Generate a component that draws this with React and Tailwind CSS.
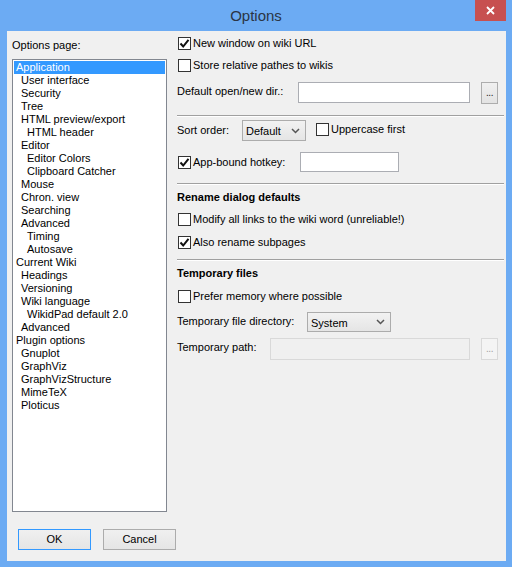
import React from 'react';

const pages = [
  ['Application', 0],
  ['User interface', 1],
  ['Security', 1],
  ['Tree', 1],
  ['HTML preview/export', 1],
  ['HTML header', 2],
  ['Editor', 1],
  ['Editor Colors', 2],
  ['Clipboard Catcher', 2],
  ['Mouse', 1],
  ['Chron. view', 1],
  ['Searching', 1],
  ['Advanced', 1],
  ['Timing', 2],
  ['Autosave', 2],
  ['Current Wiki', 0],
  ['Headings', 1],
  ['Versioning', 1],
  ['Wiki language', 1],
  ['WikidPad default 2.0', 2],
  ['Advanced', 1],
  ['Plugin options', 0],
  ['Gnuplot', 1],
  ['GraphViz', 1],
  ['GraphVizStructure', 1],
  ['MimeTeX', 1],
  ['Ploticus', 1],
];

const indent = ['pl-[2px]', 'pl-[7px]', 'pl-[13px]'];

const CheckBox = ({ checked, label, className = '' }) => (
  <div className={`flex items-center h-[13px] ${className}`}>
    <div className="w-[13px] h-[13px] border border-[#333333] bg-white flex items-center justify-center shrink-0">
      {checked && (
        <svg width="11" height="11" viewBox="0 0 11 11">
          <path d="M1.5 5.5 L4.2 8.5 L9.5 1.8" fill="none" stroke="#111" strokeWidth="2" />
        </svg>
      )}
    </div>
    <span className="ml-[2px] leading-none">{label}</span>
  </div>
);

const Select = ({ value, className }) => (
  <div
    className={`flex items-center justify-between border border-[#acacac] bg-gradient-to-b from-[#f2f2f2] to-[#e5e5e5] pl-[3px] pr-[5px] ${className}`}
  >
    <span className="mt-[2px]">{value}</span>
    <svg width="9" height="6" viewBox="0 0 9 6">
      <path d="M1 1 L4.5 4.5 L8 1" fill="none" stroke="#555" strokeWidth="1.5" />
    </svg>
  </div>
);

const DotsButton = ({ disabled }) => (
  <div
    className={`w-[17px] h-[22px] border flex items-end justify-center pb-[5px] ${
      disabled
        ? 'border-[#d9d9d9] bg-[#f4f4f4] text-[#a0a0a0]'
        : 'border-[#adadad] bg-gradient-to-b from-[#f0f0f0] to-[#e3e3e3] text-[#222]'
    }`}
  >
    <span className="leading-none text-[10px] tracking-[-0.5px]">...</span>
  </div>
);

const Separator = ({ className }) => (
  <div className={`h-[2px] border-t border-[#a0a0a0] bg-white ${className}`} />
);

const App = () => {
  return (
    <div
      className="w-[512px] h-[567px] bg-[#6cabf3] flex flex-col text-[11px] text-black"
      style={{ fontFamily: '"Liberation Sans", Arial, sans-serif' }}
    >
      {/* Title bar */}
      <div className="relative h-[31px] shrink-0 flex items-center justify-center">
        <span className="text-[15px] text-[#2a3545] mt-[1px]">Options</span>
        <div className="absolute right-[6px] top-0 w-[31px] h-[21px] bg-[#c75050] flex items-center justify-center">
          <svg width="9" height="9" viewBox="0 0 9 9">
            <path d="M1 1 L8 8 M8 1 L1 8" stroke="#fff" strokeWidth="1.8" />
          </svg>
        </div>
      </div>

      {/* Client */}
      <div className="flex-1 ml-[7px] mr-[6px] mb-[6px] bg-[#f0f0f0] flex">
        {/* Left column */}
        <div className="w-[170px] shrink-0 flex flex-col pl-[5px]">
          <div className="mt-[8px] h-[13px] leading-[13px]">Options page:</div>
          <div className="mt-[7px] w-[155px] h-[453px] border border-[#828790] bg-white p-[1px]">
            {pages.map(([name, level], i) => (
              <div
                key={i}
                className={`h-[13px] leading-[13px] whitespace-nowrap ${indent[level]} ${
                  i === 0 ? 'bg-[#3399ff] text-white' : ''
                }`}
              >
                {name}
              </div>
            ))}
          </div>
          <div className="flex mt-[17px] ml-[6px] gap-[12px]">
            <div className="w-[73px] h-[21px] border border-[#3399ff] bg-gradient-to-b from-[#f0f0f0] to-[#e5e5e5] flex items-center justify-center">
              OK
            </div>
            <div className="w-[73px] h-[21px] border border-[#acacac] bg-gradient-to-b from-[#f0f0f0] to-[#e5e5e5] flex items-center justify-center">
              Cancel
            </div>
          </div>
        </div>

        {/* Right panel */}
        <div className="flex-1 flex flex-col pr-[2px]">
          <CheckBox checked label="New window on wiki URL" className="mt-[6px] ml-[1px]" />
          <CheckBox label="Store relative pathes to wikis" className="mt-[9px] ml-[1px]" />

          <div className="flex mt-[10px] h-[21px]">
            <span className="w-[121px] pt-[1px]">Default open/new dir.:</span>
            <div className="w-[172px] h-[21px] border border-[#abadb3] bg-white" />
            <div className="ml-[11px]">
              <DotsButton />
            </div>
          </div>

          <Separator className="mt-[12px]" />

          <div className="flex items-center mt-[3px] h-[21px]">
            <span className="w-[65px]">Sort order:</span>
            <Select value="Default" className="w-[64px] h-[21px]" />
            <CheckBox label="Uppercase first" className="ml-[10px] -mt-[3px]" />
          </div>

          <div className="flex items-center mt-[11px] h-[20px]">
            <CheckBox checked label="App-bound hotkey:" className="ml-[1px] w-[122px]" />
            <div className="w-[99px] h-[20px] border border-[#abadb3] bg-white" />
          </div>

          <Separator className="mt-[11px]" />

          <div className="mt-[6px] h-[13px] leading-[13px] font-bold">Rename dialog defaults</div>
          <CheckBox label="Modify all links to the wiki word (unreliable!)" className="mt-[9px] ml-[1px]" />
          <CheckBox checked label="Also rename subpages" className="mt-[10px] ml-[1px]" />

          <Separator className="mt-[10px]" />

          <div className="mt-[6px] h-[13px] leading-[13px] font-bold">Temporary files</div>
          <CheckBox label="Prefer memory where possible" className="mt-[10px] ml-[1px]" />

          <div className="flex mt-[9px] h-[20px]">
            <span className="w-[130px] pt-[1px]">Temporary file directory:</span>
            <Select value="System" className="w-[84px] h-[20px]" />
          </div>

          <div className="flex mt-[6px] h-[22px]">
            <span className="w-[93px] pt-[1px]">Temporary path:</span>
            <div className="w-[200px] h-[22px] border border-[#d9d9d9] bg-[#f0f0f0]" />
            <div className="ml-[11px]">
              <DotsButton disabled />
            </div>
          </div>
        </div>
      </div>
    </div>
  );
};

export default App;
